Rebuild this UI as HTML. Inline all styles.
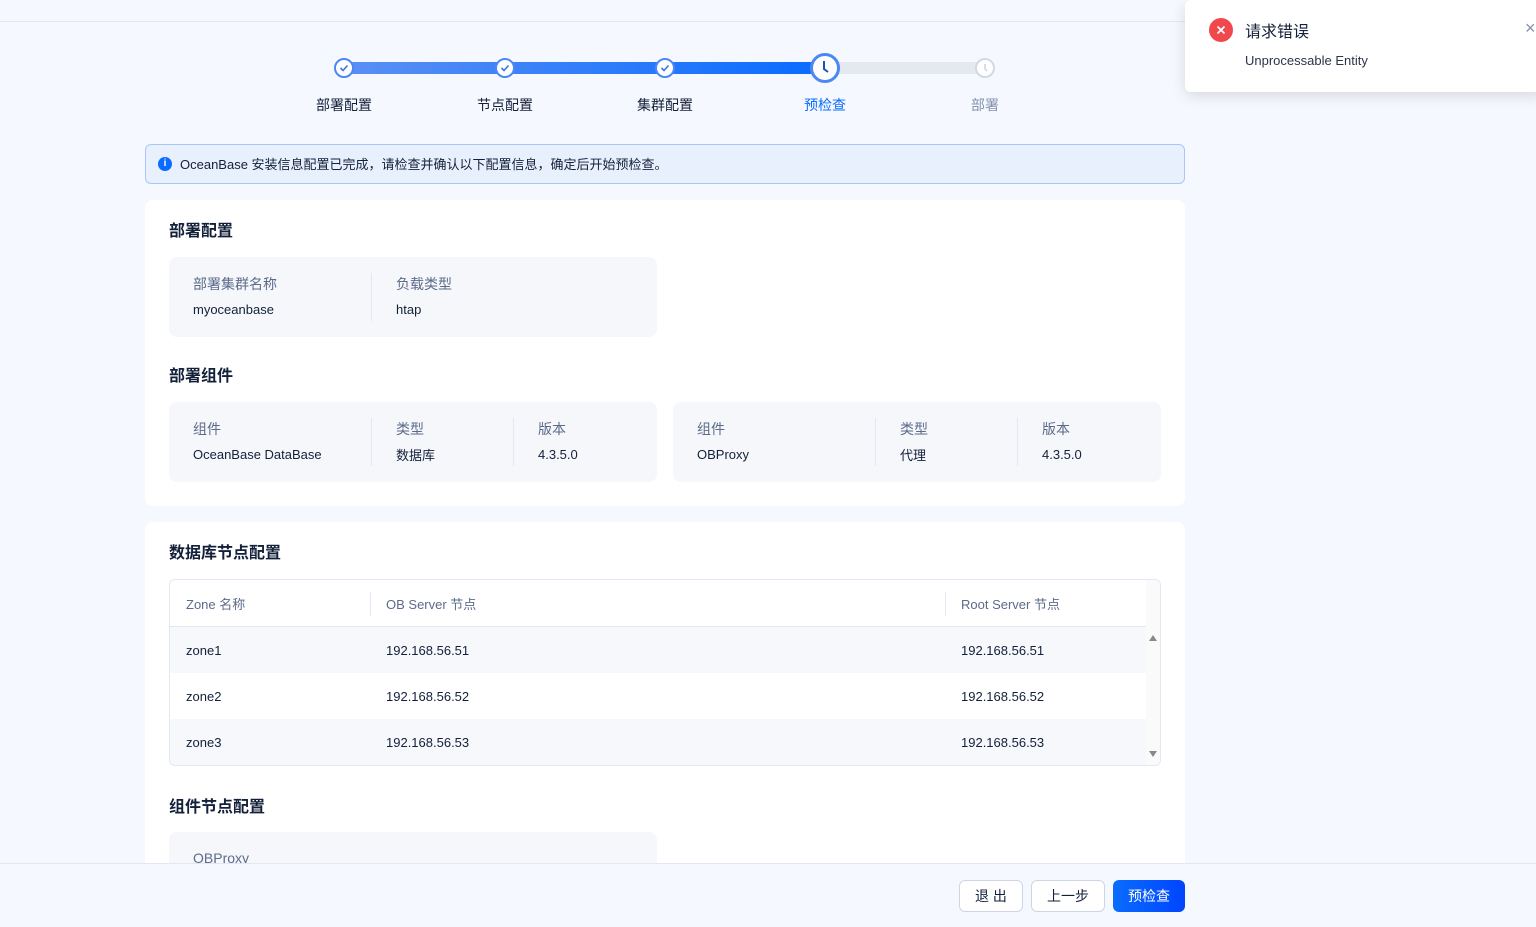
<!DOCTYPE html>
<html><head><meta charset="utf-8"><style>
*{box-sizing:border-box;margin:0;padding:0}
body{width:1536px;height:927px;overflow:hidden;background:#f5f8fe;font-family:"Liberation Sans","Noto Sans CJK SC",sans-serif;color:#132039;font-size:13px;position:relative}
.abs{position:absolute}
.topline{left:0;top:21px;width:1536px;height:1px;background:#e2e8f3}
.bar{height:12px;top:62px}
.dot{width:20px;height:20px;border-radius:50%;background:#fff;border:2px solid #4d87f5;top:58px}
.lbl{top:95px;font-size:14px;width:100px;text-align:center}
.card{background:#fff;border-radius:8px;left:145px;width:1040px}
h3{position:absolute;font-size:16px;font-weight:bold;color:#132039}
.box{background:#f5f7fb;border-radius:8px}
.k{color:#5c6b8a;font-size:14px;position:absolute}
.v{color:#132039;font-size:13px;position:absolute}
.sep{position:absolute;width:1px;background:#e2e8f3}
.btn{top:880px;height:32px;border-radius:6px;border:1px solid #cdd5e4;background:#fff;font-size:14px;text-align:center;line-height:30px}
</style></head><body>
<div class="abs topline"></div>
<div class="abs bar" style="left:344px;width:481px;background:linear-gradient(90deg,#5a8ff5,#0a6cff)"></div>
<div class="abs bar" style="left:825px;width:160px;background:#e3e8f1"></div>
<div class="abs dot" style="left:334px"><svg width="16" height="16" viewBox="0 0 16 16"><path d="M4.5 8l2.5 2.5 4.5-5" stroke="#3a75e8" stroke-width="1.6" fill="none"/></svg></div>
<div class="abs dot" style="left:495px"><svg width="16" height="16" viewBox="0 0 16 16"><path d="M4.5 8l2.5 2.5 4.5-5" stroke="#3a75e8" stroke-width="1.6" fill="none"/></svg></div>
<div class="abs dot" style="left:655px"><svg width="16" height="16" viewBox="0 0 16 16"><path d="M4.5 8l2.5 2.5 4.5-5" stroke="#3a75e8" stroke-width="1.6" fill="none"/></svg></div>
<div class="abs" style="left:810px;top:53px;width:30px;height:30px;border-radius:50%;background:#fff;border:3px solid #4d87f5"><svg width="24" height="24" viewBox="0 0 24 24"><path d="M11 5v8l4 3" stroke="#1f4fb8" stroke-width="2" fill="none"/></svg></div>
<div class="abs dot" style="left:975px;border-color:#d3d9e4"><svg width="16" height="16" viewBox="0 0 16 16"><path d="M8 4v5l2 2" stroke="#c8cfdb" stroke-width="1.4" fill="none"/></svg></div>
<div class="abs lbl" style="left:294px">部署配置</div>
<div class="abs lbl" style="left:455px">节点配置</div>
<div class="abs lbl" style="left:615px">集群配置</div>
<div class="abs lbl" style="left:775px;color:#0a6cff">预检查</div>
<div class="abs lbl" style="left:935px;color:#8592ad">部署</div>

<div class="abs" style="left:145px;top:144px;width:1040px;height:40px;background:#e8f0fd;border:1px solid #a9c6f7;border-radius:6px"></div>
<div class="abs" style="left:158px;top:157px;width:14px;height:14px;border-radius:50%;background:#0a6cff;color:#fff;font-size:10px;text-align:center;line-height:14px;font-weight:bold">i</div>
<div class="abs" style="left:180px;top:154px;font-size:13px">OceanBase 安装信息配置已完成，请检查并确认以下配置信息，确定后开始预检查。</div>

<div class="abs card" style="top:200px;height:306px"></div>
<h3 style="left:169px;top:217px">部署配置</h3>
<div class="abs box" style="left:169px;top:257px;width:488px;height:80px"></div>
<div class="sep" style="left:371px;top:273px;height:48px"></div>
<div class="k" style="left:193px;top:274px">部署集群名称</div><div class="v" style="left:193px;top:302px">myoceanbase</div>
<div class="k" style="left:396px;top:274px">负载类型</div><div class="v" style="left:396px;top:302px">htap</div>
<h3 style="left:169px;top:362px">部署组件</h3>
<div class="abs box" style="left:169px;top:402px;width:488px;height:80px"></div>
<div class="sep" style="left:371px;top:418px;height:48px"></div><div class="sep" style="left:513px;top:418px;height:48px"></div>
<div class="k" style="left:193px;top:419px">组件</div><div class="v" style="left:193px;top:447px">OceanBase DataBase</div>
<div class="k" style="left:396px;top:419px">类型</div><div class="v" style="left:396px;top:445px">数据库</div>
<div class="k" style="left:538px;top:419px">版本</div><div class="v" style="left:538px;top:447px">4.3.5.0</div>
<div class="abs box" style="left:673px;top:402px;width:488px;height:80px"></div>
<div class="sep" style="left:875px;top:418px;height:48px"></div><div class="sep" style="left:1017px;top:418px;height:48px"></div>
<div class="k" style="left:697px;top:419px">组件</div><div class="v" style="left:697px;top:447px">OBProxy</div>
<div class="k" style="left:900px;top:419px">类型</div><div class="v" style="left:900px;top:445px">代理</div>
<div class="k" style="left:1042px;top:419px">版本</div><div class="v" style="left:1042px;top:447px">4.3.5.0</div>

<div class="abs card" style="top:522px;height:400px"></div>
<h3 style="left:169px;top:539px">数据库节点配置</h3>
<div class="abs" style="left:169px;top:579px;width:992px;height:187px;border:1px solid #e2e8f3;border-radius:6px;overflow:hidden">
 <div class="abs" style="left:0;top:0;width:976px;height:47px;border-bottom:1px solid #e2e8f3"></div>
 <div class="sep" style="left:200px;top:12px;height:24px"></div><div class="sep" style="left:775px;top:12px;height:24px"></div>
 <div class="k" style="left:16px;top:14px;font-size:13px">Zone 名称</div>
 <div class="k" style="left:216px;top:14px;font-size:13px">OB Server 节点</div>
 <div class="k" style="left:791px;top:14px;font-size:13px">Root Server 节点</div>
 <div class="abs" style="left:0;top:47px;width:976px;height:46px;background:#f6f8fc"></div>
 <div class="abs" style="left:0;top:139px;width:976px;height:46px;background:#f6f8fc"></div>
 <div class="abs" style="left:976px;top:0;width:15px;height:187px;background:#fafafa"></div>
 <div class="abs" style="left:979px;top:55px;width:0;height:0;border:4px solid transparent;border-bottom:6px solid #888;border-top:0"></div>
 <div class="abs" style="left:979px;top:171px;width:0;height:0;border:4px solid transparent;border-top:6px solid #888;border-bottom:0"></div>
 <div class="v" style="left:16px;top:63px">zone1</div><div class="v" style="left:216px;top:63px">192.168.56.51</div><div class="v" style="left:791px;top:63px">192.168.56.51</div>
 <div class="v" style="left:16px;top:109px">zone2</div><div class="v" style="left:216px;top:109px">192.168.56.52</div><div class="v" style="left:791px;top:109px">192.168.56.52</div>
 <div class="v" style="left:16px;top:155px">zone3</div><div class="v" style="left:216px;top:155px">192.168.56.53</div><div class="v" style="left:791px;top:155px">192.168.56.53</div>
</div>
<h3 style="left:169px;top:793px">组件节点配置</h3>
<div class="abs box" style="left:169px;top:832px;width:488px;height:60px"></div>
<div class="k" style="left:193px;top:850px">OBProxy</div>

<div class="abs" style="left:0;top:863px;width:1536px;height:64px;background:#f5f8fe;border-top:1px solid #e2e8f3"></div>
<div class="abs btn" style="left:959px;width:64px">退 出</div>
<div class="abs btn" style="left:1031px;width:74px">上一步</div>
<div class="abs btn" style="left:1113px;width:72px;border:none;color:#fff;background:linear-gradient(90deg,#0a6cff,#0045ff);line-height:32px">预检查</div>

<div class="abs" style="left:1185px;top:0;width:360px;height:92px;background:#fff;border-radius:6px;box-shadow:0 4px 14px rgba(0,0,0,.12)"></div>
<div class="abs" style="left:1209px;top:18px;width:24px;height:24px;border-radius:50%;background:#f0484d"><svg width="24" height="24" viewBox="0 0 24 24"><path d="M8.5 8.5l7 7M15.5 8.5l-7 7" stroke="#fff" stroke-width="1.8"/></svg></div>
<div class="abs" style="left:1245px;top:18px;font-size:16px">请求错误</div>
<div class="abs" style="left:1245px;top:53px;font-size:13px;color:#2b3548">Unprocessable Entity</div>
<div class="abs" style="left:1525px;top:18px;font-size:18px;color:#8592ad">×</div>
</body></html>
